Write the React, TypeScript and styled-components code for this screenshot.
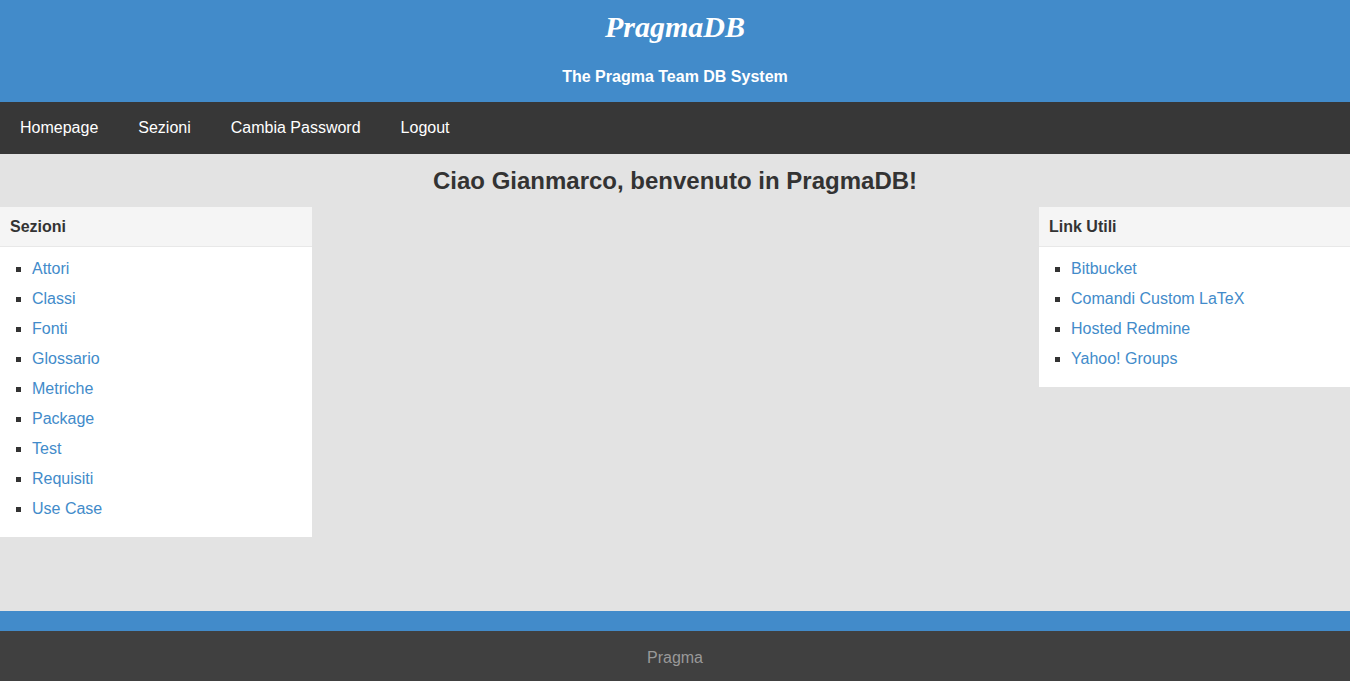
import React from "react";
import styled, { createGlobalStyle } from "styled-components";

const Global = createGlobalStyle`
  html, body { margin: 0; padding: 0; }
  body { font-family: "Liberation Sans", Arial, sans-serif; background: #e3e3e3; }
  * { box-sizing: border-box; }
`;

const Page = styled.div`
  display: flex;
  flex-direction: column;
  height: 681px;
`;

const Header = styled.header`
  background: #428bca;
  height: 102px;
  display: flex;
  flex-direction: column;
  align-items: center;
  color: #fff;
`;

const Title = styled.h1`
  margin: 8px 0 0;
  font-family: "Liberation Serif", "Times New Roman", serif;
  font-style: italic;
  font-weight: bold;
  font-size: 30px;
  line-height: 37px;
`;

const Subtitle = styled.h2`
  margin: 22px 0 0;
  font-size: 16px;
  font-weight: bold;
  line-height: 20px;
`;

const Nav = styled.nav`
  background: #373737;
  height: 52px;
  display: flex;
  align-items: center;
`;

const NavLink = styled.a`
  color: #fff;
  font-size: 16px;
  padding: 0 20px;
  line-height: 52px;
  text-decoration: none;
`;

const Main = styled.main`
  flex: 1;
  background: #e3e3e3;
  display: flex;
  flex-direction: column;
`;

const Welcome = styled.h3`
  margin: 0;
  height: 53px;
  padding-top: 13px;
  text-align: center;
  font-size: 24px;
  line-height: 28px;
  font-weight: bold;
  color: #333;
`;

const Columns = styled.div`
  display: flex;
  justify-content: space-between;
  align-items: flex-start;
`;

const Panel = styled.section<{ $w: number }>`
  width: ${(p) => p.$w}px;
  background: #fff;
`;

const PanelHead = styled.div`
  background: #f5f5f5;
  border-bottom: 1px solid #e8e8e8;
  height: 40px;
  padding: 0 10px;
  font-size: 16px;
  font-weight: bold;
  color: #333;
  line-height: 39px;
`;

const List = styled.ul`
  margin: 0;
  padding: 7px 0 13px 32px;
  list-style: square;
  color: #333;
`;

const Item = styled.li`
  font-size: 16px;
  line-height: 30px;
`;

const ItemLink = styled.a`
  color: #428bca;
  text-decoration: none;
`;

const Strip = styled.div`
  background: #428bca;
  height: 20px;
`;

const Footer = styled.footer`
  background: #404040;
  height: 50px;
  color: #999;
  font-size: 16px;
  text-align: center;
  line-height: 54px;
`;

const sezioni = ["Attori", "Classi", "Fonti", "Glossario", "Metriche", "Package", "Test", "Requisiti", "Use Case"];
const links = ["Bitbucket", "Comandi Custom LaTeX", "Hosted Redmine", "Yahoo! Groups"];

export default function App() {
  return (
    <Page>
      <Global />
      <Header>
        <Title>PragmaDB</Title>
        <Subtitle>The Pragma Team DB System</Subtitle>
      </Header>
      <Nav>
        <NavLink href="#">Homepage</NavLink>
        <NavLink href="#">Sezioni</NavLink>
        <NavLink href="#">Cambia Password</NavLink>
        <NavLink href="#">Logout</NavLink>
      </Nav>
      <Main>
        <Welcome>Ciao Gianmarco, benvenuto in PragmaDB!</Welcome>
        <Columns>
          <Panel $w={312}>
            <PanelHead>Sezioni</PanelHead>
            <List>
              {sezioni.map((s) => (
                <Item key={s}><ItemLink href="#">{s}</ItemLink></Item>
              ))}
            </List>
          </Panel>
          <Panel $w={311}>
            <PanelHead>Link Utili</PanelHead>
            <List>
              {links.map((s) => (
                <Item key={s}><ItemLink href="#">{s}</ItemLink></Item>
              ))}
            </List>
          </Panel>
        </Columns>
      </Main>
      <Strip />
      <Footer>Pragma</Footer>
    </Page>
  );
}
